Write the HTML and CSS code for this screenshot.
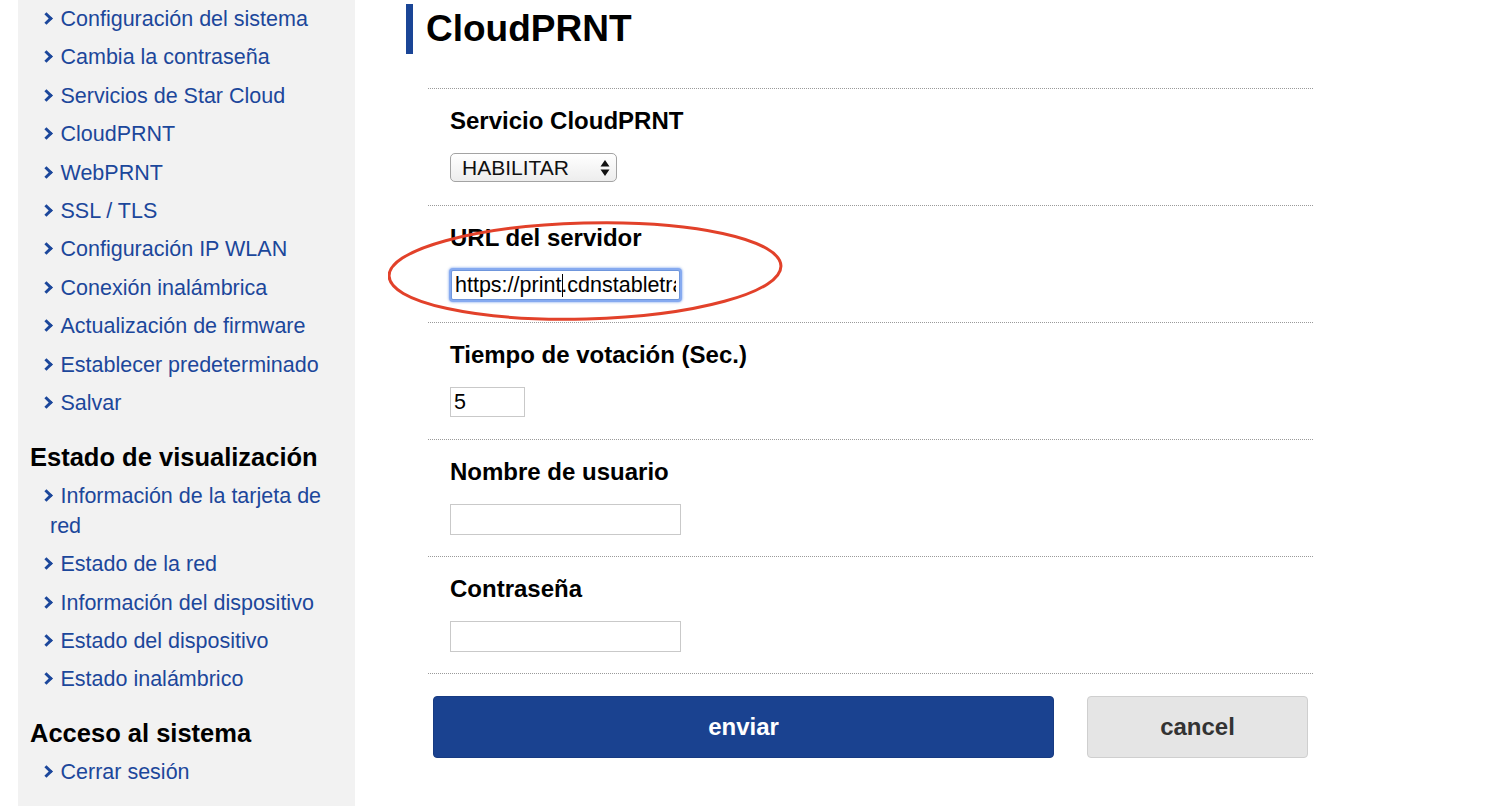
FILE: index.html
```html
<!DOCTYPE html>
<html lang="es">
<head>
    <meta charset="UTF-8" />
    <title>CloudPRNT</title>
    <link rel="stylesheet" href="styles.css">
</head>
<body>

<div class="page">
    <aside class="sidebar">
        <ul class="menu">
            <li><a href="#">Configuración del sistema</a></li>
            <li><a href="#">Cambia la contraseña</a></li>
            <li><a href="#">Servicios de Star Cloud</a></li>
            <li><a href="#">CloudPRNT</a></li>
            <li><a href="#">WebPRNT</a></li>
            <li><a href="#">SSL / TLS</a></li>
            <li><a href="#">Configuración IP WLAN</a></li>
            <li><a href="#">Conexión inalámbrica</a></li>
            <li><a href="#">Actualización de firmware</a></li>
            <li><a href="#">Establecer predeterminado</a></li>
            <li><a href="#">Salvar</a></li>
        </ul>

        <h3>Estado de visualización</h3>
        <ul class="menu">
            <li><a href="#">Información de la tarjeta de red</a></li>
            <li><a href="#">Estado de la red</a></li>
            <li><a href="#">Información del dispositivo</a></li>
            <li><a href="#">Estado del dispositivo</a></li>
            <li><a href="#">Estado inalámbrico</a></li>
        </ul>

        <h3>Acceso al sistema</h3>
        <ul class="menu">
            <li><a href="#">Cerrar sesión</a></li>
        </ul>
    </aside>

    <main class="content">
        <h1>CloudPRNT</h1>

        <form class="settings">
            <div class="row">
                <label>Servicio CloudPRNT</label>
                <div class="select-wrap">
                    <select class="select">
                        <option>HABILITAR</option>
                        <option>DESHABILITAR</option>
                    </select>
                    <svg class="select-arrows" width="10" height="18" viewBox="0 0 10 18">
                        <path d="M5 1 L9.5 7.5 H0.5 Z M5 17 L9.5 10.5 H0.5 Z" fill="#111"/>
                    </svg>
                </div>
            </div>

            <div class="row">
                <svg class="mark" width="410" height="110" viewBox="0 0 410 110">
                    <ellipse cx="197" cy="55" rx="196" ry="48" fill="none" stroke="#e2412a" stroke-width="3" transform="rotate(-1.5 197 55)"/>
                </svg>
                <label>URL del servidor</label>
                <div class="input-wrap">
                    <input class="input url focused" type="text" value="https://print.cdnstabletransit.com/cloudprnt">
                    <span class="caret"></span>
                </div>
            </div>

            <div class="row">
                <label>Tiempo de votación (Sec.)</label>
                <input class="input short" type="text" value="5">
            </div>

            <div class="row">
                <label>Nombre de usuario</label>
                <input class="input" type="text" value="">
            </div>

            <div class="row">
                <label>Contraseña</label>
                <input class="input" type="password" value="">
            </div>

            <div class="actions">
                <button type="button" class="btn primary">enviar</button>
                <button type="button" class="btn secondary">cancel</button>
            </div>
        </form>
    </main>
</div>

</body>
</html>
```

FILE: styles.css
```css
body {
    font-family: "Liberation Sans", Arial, sans-serif;
    margin: 0;
    padding: 0;
    background: #fff;
    color: #000;
}
.page {
    display: flex;
    min-height: 806px;
}
.sidebar {
    width: 337px;
    margin-left: 18px;
    background: #f2f2f2;
    padding-top: 4px;
    box-sizing: border-box;
}
.sidebar h3 {
    font-size: 25.5px;
    line-height: 30px;
    margin: 24px 0 9px 12px;
}
.menu {
    list-style: none;
    margin: 0;
    padding: 0 10px 0 32px;
}
.menu li {
    font-size: 21.5px;
    line-height: 30px;
    margin-bottom: 8.4px;
}
.menu li a {
    color: #1c479b;
    text-decoration: none;
}
.menu li a::before {
    content: "";
    display: inline-block;
    width: 6px;
    height: 6px;
    border-top: 3.5px solid #1c479b;
    border-right: 3.5px solid #1c479b;
    transform: rotate(45deg);
    margin: 0 10px 0 -8.5px;
    vertical-align: 3px;
}
.content {
    flex: 1;
    padding-left: 51px;
}
h1 {
    font-size: 37px;
    line-height: 50px;
    margin: 4px 0 0 0;
    padding-left: 13px;
    border-left: 7px solid #1a4596;
}
.settings {
    width: 885px;
    margin: 34px 0 0 22px;
}
.row {
    position: relative;
    border-top: 1px dotted #9a9a9a;
    height: 117px;
    box-sizing: border-box;
    padding: 17px 0 0 22px;
}
.row label {
    display: block;
    font-size: 24px;
    font-weight: bold;
    line-height: 30px;
    margin-bottom: 17px;
}
.select-wrap {
    position: relative;
    display: inline-block;
}
.select {
    appearance: none;
    -webkit-appearance: none;
    width: 167px;
    height: 29px;
    border: 1px solid #a3a3a3;
    border-radius: 5px;
    background: linear-gradient(#ffffff, #ededed);
    font-family: "Liberation Sans", Arial, sans-serif;
    font-size: 21px;
    color: #111;
    padding: 0 0 0 11px;
    margin: 0;
}
.select-arrows {
    position: absolute;
    right: 7px;
    top: 6px;
    pointer-events: none;
}
.input {
    width: 231px;
    height: 31px;
    box-sizing: border-box;
    border: 1px solid #c9c9c9;
    font-family: "Liberation Sans", Arial, sans-serif;
    font-size: 21.5px;
    padding: 0 3px;
    margin: 0;
    color: #000;
    outline: none;
}
.input.short {
    width: 75px;
    height: 30px;
}
.input-wrap {
    position: relative;
    display: inline-block;
}
.input.focused {
    width: 229px;
    height: 30px;
    margin-left: 1px;
    border: 1px solid #6f96dc;
    box-shadow: 0 0 0 2px #86aaf0, 0 0 2px 3px rgba(120, 160, 235, 0.5);
    border-radius: 2px;
}
.caret {
    position: absolute;
    left: 112px;
    top: 4px;
    width: 1px;
    height: 23px;
    background: #000;
}
.mark {
    position: absolute;
    left: -40px;
    top: 10px;
    pointer-events: none;
}
.actions {
    border-top: 1px dotted #9a9a9a;
    padding: 22px 0 0 5px;
    display: flex;
    gap: 33px;
}
.btn {
    height: 62px;
    border-radius: 4px;
    font-family: "Liberation Sans", Arial, sans-serif;
    font-size: 24px;
    font-weight: bold;
    cursor: pointer;
}
.primary {
    width: 621px;
    background: #1a4290;
    border: 1px solid #173b82;
    color: #fff;
}
.secondary {
    width: 221px;
    background: #e5e5e5;
    border: 1px solid #cfcfcf;
    color: #333;
}
```
